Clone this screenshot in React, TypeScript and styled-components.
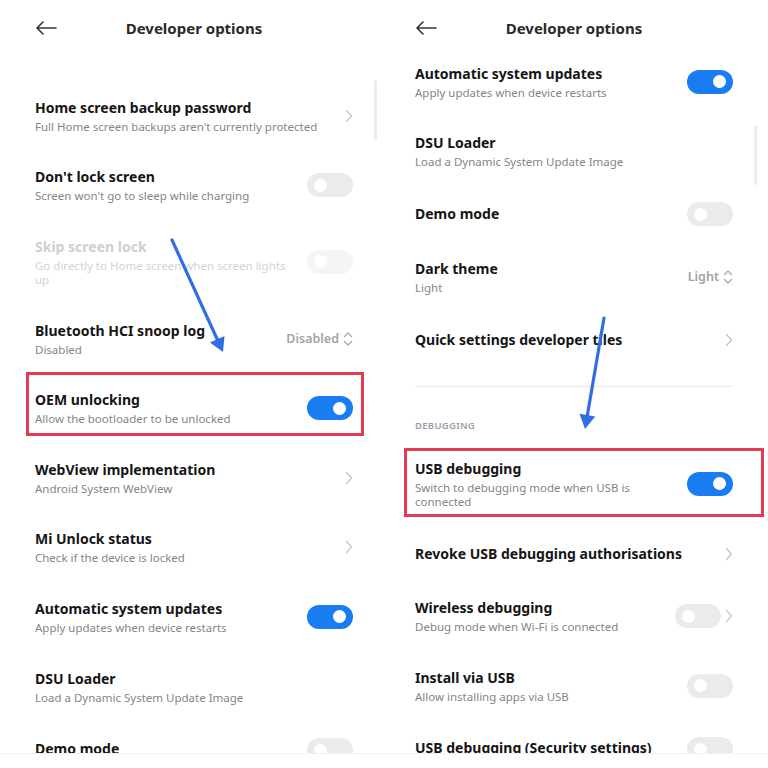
import React from 'react';
import styled, { createGlobalStyle, css } from 'styled-components';

const GlobalStyle = createGlobalStyle`
  html, body { margin: 0; padding: 0; background: #fff; }
  body { font-family: "Noto Sans", "DejaVu Sans", sans-serif; }
`;

const Shot = styled.div`
  position: relative;
  width: 768px;
  height: 768px;
  display: flex;
  background: #fff;
  overflow: hidden;
`;

const Panel = styled.div<{ $w: number; $pr: number }>`
  position: relative;
  width: ${p => p.$w}px;
  height: 754px;
  padding: 0 ${p => p.$pr}px 0 35px;
  box-sizing: border-box;
  overflow: hidden;
  border-bottom: 1px solid #f1f1f1;
  flex-shrink: 0;
`;

const Header = styled.div`
  height: 46px;
  padding-top: 10px;
  box-sizing: border-box;
  display: grid;
  grid-template-columns: 1fr auto 1fr;
  align-items: center;
`;

const Title = styled.div`
  font-size: 15px;
  font-weight: 700;
  color: #2a2a2a;
  line-height: 36px;
`;

const List = styled.div<{ $top: number }>`
  padding-top: ${p => p.$top}px;
`;

const RowWrap = styled.div<{ $box?: [number, number, number, number]; $pad: string }>`
  position: relative;
  display: flex;
  align-items: center;
  gap: 12px;
  padding: ${p => p.$pad};
  ${p => p.$box && css`
    &::after {
      content: '';
      position: absolute;
      top: ${p.$box[0]}px;
      right: ${p.$box[1]}px;
      bottom: ${p.$box[2]}px;
      left: ${p.$box[3]}px;
      border: 3px solid #e23a52;
      pointer-events: none;
    }
  `}
`;

const Text = styled.div`
  flex: 1;
  min-width: 0;
`;

const RowTitle = styled.div<{ $dim?: boolean }>`
  font-size: 14px;
  font-weight: 700;
  line-height: 20px;
  color: ${p => (p.$dim ? '#cfcfcf' : '#151515')};
  white-space: nowrap;
`;

const Sub = styled.div<{ $dim?: boolean }>`
  margin-top: 2px;
  font-size: 11.5px;
  line-height: 14px;
  color: ${p => (p.$dim ? '#d2d2d2' : '#858585')};
`;

const Toggle = styled.span<{ $on?: boolean; $dim?: boolean }>`
  position: relative;
  flex-shrink: 0;
  width: 46px;
  height: 24px;
  border-radius: 12px;
  background: ${p => (p.$on ? '#1a7cf3' : '#ebebeb')};
  opacity: ${p => (p.$dim ? 0.45 : 1)};
  &::after {
    content: '';
    position: absolute;
    top: 5.5px;
    ${p => (p.$on ? 'right: 7px;' : 'left: 7px;')}
    width: 13px;
    height: 13px;
    border-radius: 50%;
    background: #fff;
  }
`;

const Trail = styled.div`
  display: flex;
  align-items: center;
  gap: 4px;
  flex-shrink: 0;
`;

const Value = styled.span`
  font-size: 12.5px;
  font-weight: 600;
  color: #a3a3a3;
`;

const Divider = styled.div`
  margin-top: 22px;
  height: 1px;
  background: #ececec;
`;

const Section = styled.div`
  margin-top: 33px;
  margin-bottom: 10px;
  font-size: 9.5px;
  font-weight: 600;
  letter-spacing: 0.3px;
  line-height: 12px;
  color: #9a9aaa;
`;

const Scrollbar = styled.div<{ $x: number; $y: number }>`
  position: absolute;
  left: ${p => p.$x}px;
  top: ${p => p.$y}px;
  width: 3px;
  height: 60px;
  border-radius: 2px;
  background: #ececec;
`;

const Overlay = styled.svg`
  position: absolute;
  left: 0;
  top: 0;
  pointer-events: none;
`;

const BackArrow = () => (
  <svg width="22" height="14" viewBox="0 0 22 14" fill="none" stroke="#333" strokeWidth="1.6" strokeLinecap="round" strokeLinejoin="round">
    <path d="M21 7H2M8 1L2 7l6 6" />
  </svg>
);

const Chevron = () => (
  <svg width="8" height="14" viewBox="0 0 8 14" fill="none" stroke="#c6c6c6" strokeWidth="1.3" strokeLinecap="round" strokeLinejoin="round">
    <path d="M1.5 1.5L6.5 7l-5 5.5" />
  </svg>
);

const UpDown = () => (
  <svg width="10" height="16" viewBox="0 0 10 16" fill="none" stroke="#a8a8a8" strokeWidth="1.3" strokeLinecap="round" strokeLinejoin="round">
    <path d="M1.5 5.5L5 2l3.5 3.5M1.5 10.5L5 14l3.5-3.5" />
  </svg>
);

type Item = {
  title: string;
  sub?: string;
  dim?: boolean;
  trail?: 'chev' | 'on' | 'off' | 'offchev';
  value?: string;
  box?: [number, number, number, number];
  pad?: string;
};

const Row = ({ item }: { item: Item }) => (
  <RowWrap $box={item.box} $pad={item.pad ?? (item.sub ? '16.8px 0' : '16px 0')}>
    <Text>
      <RowTitle $dim={item.dim}>{item.title}</RowTitle>
      {item.sub && <Sub $dim={item.dim}>{item.sub}</Sub>}
    </Text>
    {item.trail === 'chev' && <Chevron />}
    {item.trail === 'on' && <Toggle $on />}
    {item.trail === 'off' && <Toggle $dim={item.dim} />}
    {item.trail === 'offchev' && (
      <Trail>
        <Toggle />
        <Chevron />
      </Trail>
    )}
    {item.value && (
      <Trail>
        <Value>{item.value}</Value>
        <UpDown />
      </Trail>
    )}
  </RowWrap>
);

const leftItems: Item[] = [
  { title: 'Home screen backup password', sub: "Full Home screen backups aren't currently protected", trail: 'chev' },
  { title: "Don't lock screen", sub: "Screen won't go to sleep while charging", trail: 'off' },
  { title: 'Skip screen lock', sub: 'Go directly to Home screen when screen lights up', trail: 'off', dim: true },
  { title: 'Bluetooth HCI snoop log', sub: 'Disabled', value: 'Disabled' },
  { title: 'OEM unlocking', sub: 'Allow the bootloader to be unlocked', trail: 'on', box: [-1, -11, 7, -9] },
  { title: 'WebView implementation', sub: 'Android System WebView', trail: 'chev' },
  { title: 'Mi Unlock status', sub: 'Check if the device is locked', trail: 'chev' },
  { title: 'Automatic system updates', sub: 'Apply updates when device restarts', trail: 'on' },
  { title: 'DSU Loader', sub: 'Load a Dynamic System Update Image' },
  { title: 'Demo mode', sub: ' ', trail: 'off' },
];

const rightTop: Item[] = [
  { title: 'Automatic system updates', sub: 'Apply updates when device restarts', trail: 'on' },
  { title: 'DSU Loader', sub: 'Load a Dynamic System Update Image' },
  { title: 'Demo mode', trail: 'off' },
  { title: 'Dark theme', sub: 'Light', value: 'Light' },
  { title: 'Quick settings developer tiles', trail: 'chev', pad: '18px 0 14px' },
];

const rightDebug: Item[] = [
  { title: 'USB debugging', sub: 'Switch to debugging mode when USB is connected', trail: 'on', box: [6, -31, 8, -11] },
  { title: 'Revoke USB debugging authorisations', trail: 'chev', pad: '19px 0 17px' },
  { title: 'Wireless debugging', sub: 'Debug mode when Wi-Fi is connected', trail: 'offchev' },
  { title: 'Install via USB', sub: 'Allow installing apps via USB', trail: 'off' },
  { title: 'USB debugging (Security settings)', sub: ' ', trail: 'off' },
];

const Head = () => (
  <Header>
    <BackArrow />
    <Title>Developer options</Title>
    <span />
  </Header>
);

const Arrow = ({ x1, y1, x2, y2 }: { x1: number; y1: number; x2: number; y2: number }) => {
  const a = Math.atan2(y2 - y1, x2 - x1);
  const len = 14;
  const w = 8;
  const bx = x2 - Math.cos(a) * len;
  const by = y2 - Math.sin(a) * len;
  const px = -Math.sin(a) * w;
  const py = Math.cos(a) * w;
  return (
    <g>
      <line x1={x1} y1={y1} x2={bx} y2={by} stroke="#2f6fe3" strokeWidth="3.2" strokeLinecap="round" />
      <polygon points={`${x2},${y2} ${bx + px},${by + py} ${bx - px},${by - py}`} fill="#2f6fe3" />
    </g>
  );
};

export default function App() {
  return (
    <>
      <GlobalStyle />
      <Shot>
        <Panel $w={380} $pr={27}>
          <Head />
          <List $top={35}>
            {leftItems.map(it => <Row key={it.title} item={it} />)}
          </List>
          <Scrollbar $x={374} $y={80} />
        </Panel>
        <Panel $w={388} $pr={35}>
          <Head />
          <List $top={1}>
            {rightTop.map(it => <Row key={it.title} item={it} />)}
            <Divider />
            <Section>DEBUGGING</Section>
            {rightDebug.map(it => <Row key={it.title} item={it} />)}
          </List>
          <Scrollbar $x={374} $y={125} />
        </Panel>
        <Overlay width="768" height="768" viewBox="0 0 768 768">
          <Arrow x1={172} y1={240} x2={223} y2={352} />
          <Arrow x1={604} y1={318} x2={585} y2={429} />
        </Overlay>
      </Shot>
    </>
  );
}
